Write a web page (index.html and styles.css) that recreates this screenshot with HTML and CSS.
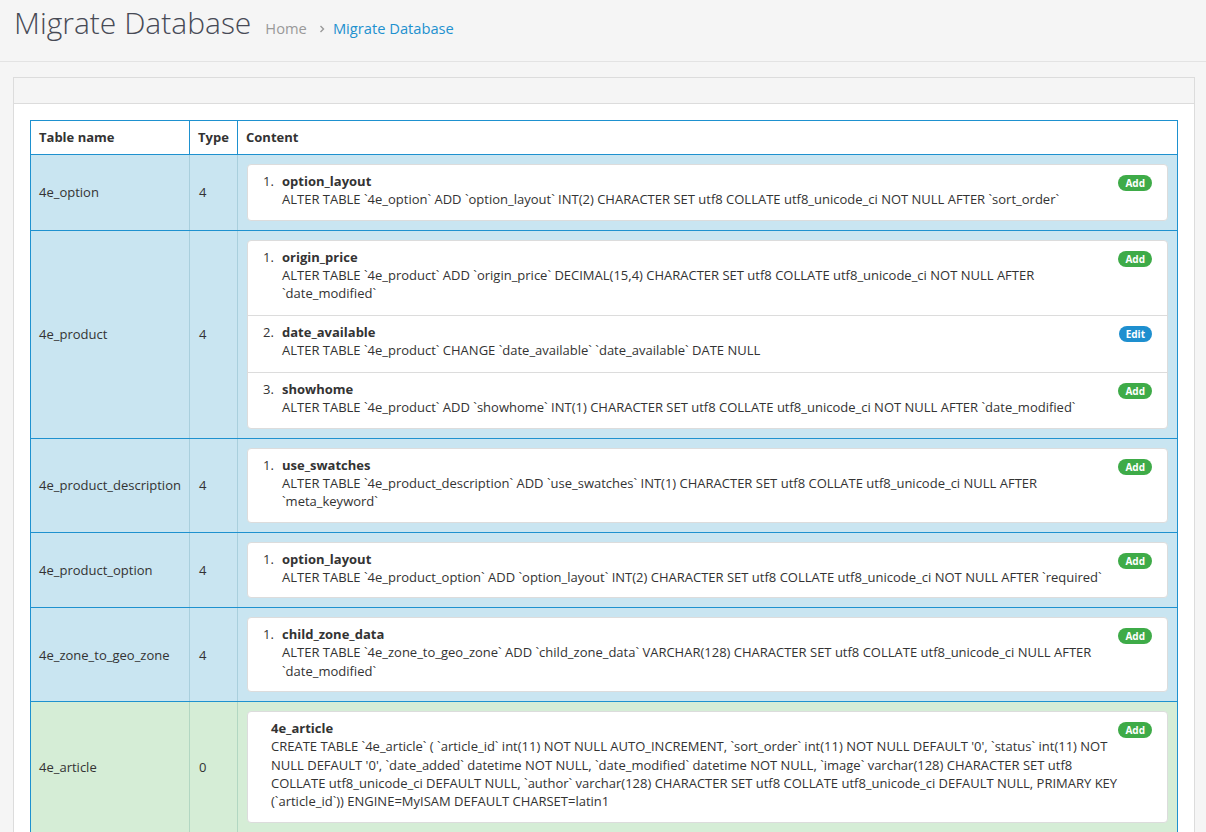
FILE: index.html
```html
<!DOCTYPE html>
<html lang="en">
<head>
<meta charset="utf-8">
<title>Migrate Database</title>
<link rel="stylesheet" href="styles.css">
</head>
<body>
<div class="page-header">
  <h1 class="page-title">Migrate Database</h1>
  <ul class="breadcrumb">
    <li class="crumb"><a class="crumb-link" href="#">Home</a></li>
    <li class="crumb-sep"><svg width="6" height="8" viewBox="0 0 6 8"><polyline points="1.5,1 4.5,4 1.5,7" fill="none" stroke="#999" stroke-width="1.4"/></svg></li>
    <li class="crumb active"><a class="crumb-link" href="#">Migrate Database</a></li>
  </ul>
</div>

<div class="panel">
  <div class="panel-heading"></div>
  <div class="panel-body">
    <table class="mtable">
      <colgroup><col class="col-name"><col class="col-type"><col class="col-content"></colgroup>
      <thead>
        <tr><th>Table name</th><th>Type</th><th>Content</th></tr>
      </thead>
      <tbody>
        <tr class="row-info">
          <td>4e_option</td><td>4</td>
          <td><ol class="changes">
            <li class="change"><span class="num">1.</span><div class="change-body"><div class="field">option_layout</div><div class="sql">ALTER TABLE `4e_option` ADD `option_layout` INT(2) CHARACTER SET utf8 COLLATE utf8_unicode_ci NOT NULL AFTER `sort_order`</div></div><span class="badge badge-add">Add</span></li>
          </ol></td>
        </tr>
        <tr class="row-info">
          <td>4e_product</td><td>4</td>
          <td><ol class="changes">
            <li class="change"><span class="num">1.</span><div class="change-body"><div class="field">origin_price</div><div class="sql">ALTER TABLE `4e_product` ADD `origin_price` DECIMAL(15,4) CHARACTER SET utf8 COLLATE utf8_unicode_ci NOT NULL AFTER `date_modified`</div></div><span class="badge badge-add">Add</span></li>
            <li class="change"><span class="num">2.</span><div class="change-body"><div class="field">date_available</div><div class="sql">ALTER TABLE `4e_product` CHANGE `date_available` `date_available` DATE NULL</div></div><span class="badge badge-edit">Edit</span></li>
            <li class="change"><span class="num">3.</span><div class="change-body"><div class="field">showhome</div><div class="sql">ALTER TABLE `4e_product` ADD `showhome` INT(1) CHARACTER SET utf8 COLLATE utf8_unicode_ci NOT NULL AFTER `date_modified`</div></div><span class="badge badge-add">Add</span></li>
          </ol></td>
        </tr>
        <tr class="row-info">
          <td>4e_product_description</td><td>4</td>
          <td><ol class="changes">
            <li class="change"><span class="num">1.</span><div class="change-body"><div class="field">use_swatches</div><div class="sql">ALTER TABLE `4e_product_description` ADD `use_swatches` INT(1) CHARACTER SET utf8 COLLATE utf8_unicode_ci NULL AFTER `meta_keyword`</div></div><span class="badge badge-add">Add</span></li>
          </ol></td>
        </tr>
        <tr class="row-info">
          <td>4e_product_option</td><td>4</td>
          <td><ol class="changes">
            <li class="change"><span class="num">1.</span><div class="change-body"><div class="field">option_layout</div><div class="sql">ALTER TABLE `4e_product_option` ADD `option_layout` INT(2) CHARACTER SET utf8 COLLATE utf8_unicode_ci NOT NULL AFTER `required`</div></div><span class="badge badge-add">Add</span></li>
          </ol></td>
        </tr>
        <tr class="row-info">
          <td>4e_zone_to_geo_zone</td><td>4</td>
          <td><ol class="changes">
            <li class="change"><span class="num">1.</span><div class="change-body"><div class="field">child_zone_data</div><div class="sql">ALTER TABLE `4e_zone_to_geo_zone` ADD `child_zone_data` VARCHAR(128) CHARACTER SET utf8 COLLATE utf8_unicode_ci NULL AFTER `date_modified`</div></div><span class="badge badge-add">Add</span></li>
          </ol></td>
        </tr>
        <tr class="row-success">
          <td>4e_article</td><td>0</td>
          <td><ol class="changes">
            <li class="change"><span class="num num-blank"></span><div class="change-body"><div class="field">4e_article</div><div class="sql">CREATE TABLE `4e_article` ( `article_id` int(11) NOT NULL AUTO_INCREMENT, `sort_order` int(11) NOT NULL DEFAULT '0', `status` int(11) NOT NULL DEFAULT '0', `date_added` datetime NOT NULL, `date_modified` datetime NOT NULL, `image` varchar(128) CHARACTER SET utf8 COLLATE utf8_unicode_ci DEFAULT NULL, `author` varchar(128) CHARACTER SET utf8 COLLATE utf8_unicode_ci DEFAULT NULL, PRIMARY KEY (`article_id`)) ENGINE=MyISAM DEFAULT CHARSET=latin1</div></div><span class="badge badge-add">Add</span></li>
          </ol></td>
        </tr>
      </tbody>
    </table>
  </div>
</div>
</body>
</html>
```

FILE: styles.css
```css
* { box-sizing: border-box; }

body {
  margin: 0;
  background: #f5f5f5;
  font-family: "Open Sans", "DejaVu Sans", sans-serif;
  font-size: 13px;
  color: #333;
}

.page-header {
  display: flex;
  align-items: baseline;
  height: 62px;
  padding: 3px 14px 0;
  border-bottom: 1px solid #e3e3e3;
}

.page-title {
  margin: 0;
  font-size: 30px;
  font-weight: 300;
  line-height: 40px;
  color: #474a55;
}

.breadcrumb {
  display: flex;
  align-items: baseline;
  list-style: none;
  margin: 0 0 0 14px;
  padding: 0;
  font-size: 14.7px;
}

.crumb-link {
  color: #999;
  text-decoration: none;
}

.crumb.active .crumb-link {
  color: #1e91cf;
}

.crumb-sep {
  margin: 0 8px 0 12px;
  display: flex;
  align-self: center;
  padding-top: 2px;
}

.panel {
  margin: 15px 11px 0 13px;
  border: 1px solid #dcdcdc;
  background: #fff;
}

.panel-heading {
  height: 26px;
  background: #f5f5f5;
  border-bottom: 1px solid #dcdcdc;
}

.panel-body {
  padding: 16px;
}

.mtable {
  width: 100%;
  border-collapse: collapse;
  table-layout: fixed;
}

.col-name { width: 159px; }
.col-type { width: 48px; }

.mtable th {
  text-align: left;
  font-weight: 700;
  padding: 8px 8px;
  line-height: 17px;
  border: 1px solid #1e91cf;
}

.mtable td {
  padding: 9px 9px;
  line-height: 18px;
  vertical-align: middle;
  border-top: 1px solid #1e91cf;
  border-bottom: 1px solid #1e91cf;
  border-left: 1px solid #a9cfdd;
  border-right: 1px solid #a9cfdd;
}

.mtable td:first-child { border-left: 1px solid #1e91cf; padding-left: 8px; }
.mtable td:last-child { border-right: 1px solid #1e91cf; }

.row-info td { background: #c9e5f1; }
.row-success td { background: #d5edd6; }
.row-success td { border-left-color: #b2d7c2; border-right-color: #b2d7c2; }
.row-success td:first-child { border-left-color: #1e91cf; }
.row-success td:last-child { border-right-color: #1e91cf; }

.changes {
  list-style: none;
  margin: 0;
  padding: 0;
  background: #fff;
  border: 1px solid #dcdcdc;
  border-radius: 4px;
}

.change {
  position: relative;
  display: flex;
  align-items: flex-start;
  padding: 7px 40px 11px 15px;
  line-height: 18.3px;
}

.change:not(:last-child) {
  padding-bottom: 12.5px;
}

.change + .change {
  border-top: 1px solid #dcdcdc;
}

.num {
  flex: 0 0 19px;
}

.num-blank {
  flex-basis: 8px;
}

.change-body {
  flex: 1;
  min-width: 0;
}

.field {
  font-weight: 700;
}

.badge {
  position: absolute;
  top: 10px;
  right: 15px;
  height: 16px;
  padding: 0 7px;
  border-radius: 8px;
  font-size: 10px;
  font-weight: 700;
  line-height: 16px;
  color: #fff;
}

.badge-add { background: #3eab48; }
.badge-edit { background: #1e8fcf; }
```
